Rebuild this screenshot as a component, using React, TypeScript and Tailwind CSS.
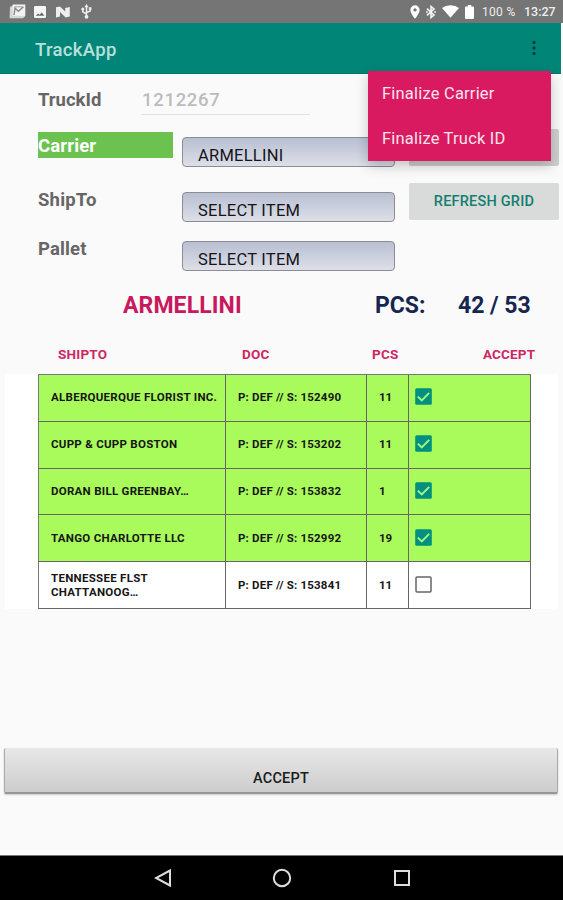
import React from "react";

type Row = { name: string; doc: string; pcs: string; accepted: boolean };

const rows: Row[] = [
  { name: "ALBERQUERQUE FLORIST INC.", doc: "152490", pcs: "11", accepted: true },
  { name: "CUPP & CUPP BOSTON", doc: "153202", pcs: "11", accepted: true },
  { name: "DORAN BILL GREENBAY…", doc: "153832", pcs: "1", accepted: true },
  { name: "TANGO CHARLOTTE LLC", doc: "152992", pcs: "19", accepted: true },
  { name: "TENNESSEE FLST CHATTANOOG…", doc: "153841", pcs: "11", accepted: false },
];

function StatusBar() {
  return (
    <div className="flex h-[23px] items-center justify-between bg-[#757575] pl-[9px] pr-[8px] text-[#eeeeee]">
      <div className="flex items-center">
        <svg width="17" height="15" viewBox="0 0 17 15">
          <path d="M1 2.500h2L4 .6h12.200v11.600L14 14.200H.6z" fill="#d6d6d6" />
          <path d="M3.600 .8h12.600v11H3.600z" fill="#f2f2f2" />
          <path d="M5 11 6 4l3.300 3.200 5.200-4.400" fill="none" stroke="#858585" strokeWidth="1.400" />
          <path d="M5.500 2.800h8" stroke="#a0a0a0" />
        </svg>
        <svg className="ml-[8px]" width="12" height="12" viewBox="0 0 12 12">
          <rect width="12" height="12" rx="1.2" fill="#f5f5f5" />
          <path d="M1.800 9.800 4 7.500l1.500 1.200L7.800 6.500l2.600 3.300z" fill="#696969" />
        </svg>
        <svg className="ml-[10px]" width="14" height="12" viewBox="0 0 14 12">
          <path d="M0 1.200 4 .6l5.200 5V2L13.800 1v9.600L9.600 11.400 4 6v4.600L0 11.400z" fill="#eeeeee" />
        </svg>
        <svg className="ml-[11px]" width="11" height="15" viewBox="0 0 11 15" fill="none" stroke="#eee" strokeWidth="1.500">
          <path d="M5.500 2v10M5.500 10 1.800 7.800V5M5.500 8.500 9.200 7V4.500" />
          <path d="M5.500 0 7.600 3.200H3.400zM7.800 3.200h2.700v2.600H7.800z" fill="#eee" stroke="none" />
          <circle cx="1.800" cy="5" r="1.500" fill="#eee" stroke="none" />
          <circle cx="5.500" cy="12.800" r="1.900" fill="#eee" stroke="none" />
        </svg>
      </div>
      <div className="flex items-center">
        <svg width="10" height="14" viewBox="0 0 10 14">
          <path fillRule="evenodd" d="M5 .3A4.600 4.600 0 0 0 .4 4.900C.4 8.200 5 13.700 5 13.700s4.600-5.500 4.600-8.800A4.600 4.600 0 0 0 5 .3zm0 2.900a1.700 1.700 0 1 1 0 3.400 1.700 1.700 0 0 1 0-3.400z" fill="#fff" />
        </svg>
        <svg className="ml-[6px]" width="10" height="14" viewBox="0 0 10 14" fill="none" stroke="#f5f5f5" strokeWidth="1.600">
          <path d="M1 3.600 8 10 5 12.500V1.500L8 4 1 10.400" />
          <path d="M0 7h1.800M8.200 7H10" />
        </svg>
        <svg className="ml-[6px]" width="17" height="13" viewBox="0 0 17 13">
          <path d="M8.500 12.800 0 3Q3.500 .3 8.500 .3T17 3z" fill="#fff" />
        </svg>
        <svg className="ml-[6px]" width="9" height="14" viewBox="0 0 9 14">
          <path d="M2.800 0h3.400v1.500H8q1 0 1 1V13q0 1-1 1H1q-1 0-1-1V2.500q0-1 1-1h1.800z" fill="#fff" />
        </svg>
        <span className="ml-[8px] w-[34px] whitespace-nowrap text-[12px] leading-[16px] tracking-[0.3px]">100 %</span>
        <span className="ml-[8px] mt-px w-[31px] whitespace-nowrap text-[12.500px] font-medium leading-[16px]">13:27</span>
      </div>
    </div>
  );
}

function OverflowMenu() {
  return (
    <div className="absolute left-[368px] top-[71px] z-10 flex h-[90px] w-[183px] flex-col bg-[#d91a60] pl-[14px] text-[16.500px] text-[#fde3ec] shadow-[0_5px_12px_rgba(0,0,0,0.22)]">
      <div className="flex h-[45px] items-center whitespace-nowrap pt-[2px] tracking-[0.200px]">Finalize Carrier</div>
      <div className="flex h-[45px] items-center whitespace-nowrap pt-[2px] tracking-[0.200px]">Finalize Truck ID</div>
    </div>
  );
}

function Spinner({ value }: { value: string }) {
  return (
    <div className="flex h-[30px] w-[213px] items-end rounded-[4px] border border-[#8c8c92] bg-linear-to-b from-[#b9bfd2] to-[#dddfe8] pl-[15px] text-[16.500px] font-normal leading-[21px] text-[#151517]">
      <span className="whitespace-nowrap tracking-[0.250px]">{value}</span>
    </div>
  );
}

function Checkbox({ checked }: { checked: boolean }) {
  return checked ? (
    <svg width="17" height="17" viewBox="0 0 17 17">
      <rect x=".2" y=".2" width="16.600" height="16.600" rx="1.500" fill="#009080" />
      <path d="m2.800 8.600 4 3.900 7.400-7.700" fill="none" stroke="#a8f77e" strokeWidth="1.900" />
    </svg>
  ) : (
    <svg width="17" height="17" viewBox="0 0 17 17">
      <rect x="1" y="1" width="15" height="15" rx="1" fill="#fff" stroke="#666" strokeWidth="1.500" />
    </svg>
  );
}

export default function App() {
  return (
    <div className="relative flex h-[900px] w-[563px] flex-col overflow-hidden bg-[#fafafa] font-['Roboto',sans-serif]">
      <StatusBar />
      <header className="mr-[2px] flex h-[51px] shrink-0 items-center justify-between border-b border-[#067768] bg-[#008577] pl-[35px] pr-[25px]">
        <h1 className="mt-[5px] text-[18.500px] font-medium tracking-[0.350px] text-[#b9e0dc]">TrackApp</h1>
        <svg width="4" height="14" viewBox="0 0 4 14" fill="#063d37">
          <rect x=".5" y="0" width="3" height="3" rx="1" />
          <rect x=".5" y="5.500" width="3" height="3" rx="1" />
          <rect x=".5" y="11" width="3" height="3" rx="1" />
        </svg>
      </header>
      <OverflowMenu />

      <section className="flex h-[212px] shrink-0 flex-col pl-[38px] text-[18.500px] font-bold text-[#666]">
        <div className="flex h-[55px] items-start pt-[11px]">
          <span className="w-[103px] pt-[3px] leading-[24px]">TruckId</span>
          <span className="h-[30px] w-[169px] border-b border-[#e2e2e2] pl-px pt-[3px] font-medium leading-[24px] tracking-[0.700px] text-[#bcbcbc]">1212267</span>
        </div>
        <div className="flex h-[54px] items-start pt-[3px]">
          <span className="h-[26px] w-[135px] bg-[#6cc24f] leading-[28px] tracking-[0.150px] text-white">Carrier</span>
          <div className="ml-[9px] mt-[5px]"><Spinner value="ARMELLINI" /></div>
          <div className="-mt-[3px] ml-[14px] h-[37px] w-[150px] rounded-[2px] bg-[#cfcfcf]" />
        </div>
        <div className="flex h-[49px] items-start">
          <span className="w-[144px] pt-[5px] leading-[25px] tracking-[0.200px]">ShipTo</span>
          <div className="mt-[9px]"><Spinner value="SELECT ITEM" /></div>
          <button className="ml-[14px] h-[37px] w-[150px] rounded-[2px] bg-[#d9dada] text-[14.500px] font-medium tracking-[0.2px] text-[#12806f]">REFRESH GRID</button>
        </div>
        <div className="flex h-[49px] items-start">
          <span className="w-[144px] pt-[5px] leading-[25px] tracking-[0.150px]">Pallet</span>
          <div className="mt-[9px]"><Spinner value="SELECT ITEM" /></div>
        </div>
      </section>

      <div className="flex h-[38px] shrink-0 items-center pl-[123px] pt-[2px] text-[23px] font-bold text-[#152650]">
        <span className="w-[252px] whitespace-nowrap tracking-[0.100px] text-[#c9185d]">ARMELLINI</span>
        <span className="w-[83px]">PCS:</span>
        <span className="whitespace-nowrap">42 / 53</span>
      </div>

      <div className="flex h-[50px] shrink-0 items-end pb-[12px] pl-[58px] text-[13.500px] font-bold leading-[16px] text-[#cd2765]">
        <span className="w-[184px] tracking-[0.2px]">SHIPTO</span>
        <span className="w-[130px] tracking-[0.2px]">DOC</span>
        <span className="w-[111px] tracking-[0.2px]">PCS</span>
        <span className="tracking-[0.150px]">ACCEPT</span>
      </div>

      <div className="mx-[5px] shrink-0 bg-white pl-[33px]">
        <div className="w-[493px] border-l border-t border-[#777]">
          {rows.map((row) => (
            <div
              key={row.doc}
              className={`flex h-[46.800px] text-[11.500px] font-bold leading-[14px] text-[#161616] ${row.accepted ? "bg-[#a9fb5b]" : "bg-white"}`}
            >
              <div className="flex w-[187px] items-center border-b border-r border-[#666] pb-px pl-[12px]">
                <span className="w-[173px] shrink-0 tracking-[0.280px]">{row.name}</span>
              </div>
              <div className="flex w-[141px] items-center whitespace-nowrap border-b border-r border-[#666] pb-px pl-[12px] tracking-[0.200px]">P: DEF // S: {row.doc}</div>
              <div className="flex w-[42px] items-center border-b border-r border-[#666] pb-px pl-[12px]">{row.pcs}</div>
              <div className="flex w-[122px] items-center border-b border-r border-[#666] pb-[2px] pl-[6px]">
                <Checkbox checked={row.accepted} />
              </div>
            </div>
          ))}
        </div>
      </div>

      <button className="mx-[4px] mt-[139px] flex h-[46px] w-[554px] shrink-0 items-end justify-center rounded-[2px] border-b-2 border-l border-r border-b-[#969696] border-l-[#aaa] border-r-[#aaa] bg-linear-to-b from-[#e8e8e8] to-[#cdcdcd] pb-[2px] text-[14.500px] font-medium tracking-[0.2px] text-[#1b1b1b] shadow-[0_1px_2px_rgba(0,0,0,0.2)]">
        ACCEPT
      </button>

      <nav className="mt-auto flex h-[45px] shrink-0 items-center border-t border-[#777] bg-black pl-[154px] text-[#ddd]">
        <svg width="18" height="20" viewBox="0 0 18 20" fill="none" stroke="currentColor" strokeWidth="2">
          <path d="M16 2.500v15L2 10z" />
        </svg>
        <svg className="ml-[100px]" width="20" height="20" viewBox="0 0 20 20" fill="none" stroke="currentColor" strokeWidth="2">
          <circle cx="10" cy="10" r="8.200" />
        </svg>
        <svg className="ml-[101px]" width="18" height="18" viewBox="0 0 18 18" fill="none" stroke="currentColor" strokeWidth="2">
          <rect x="2" y="2" width="14" height="14" />
        </svg>
      </nav>
    </div>
  );
}
